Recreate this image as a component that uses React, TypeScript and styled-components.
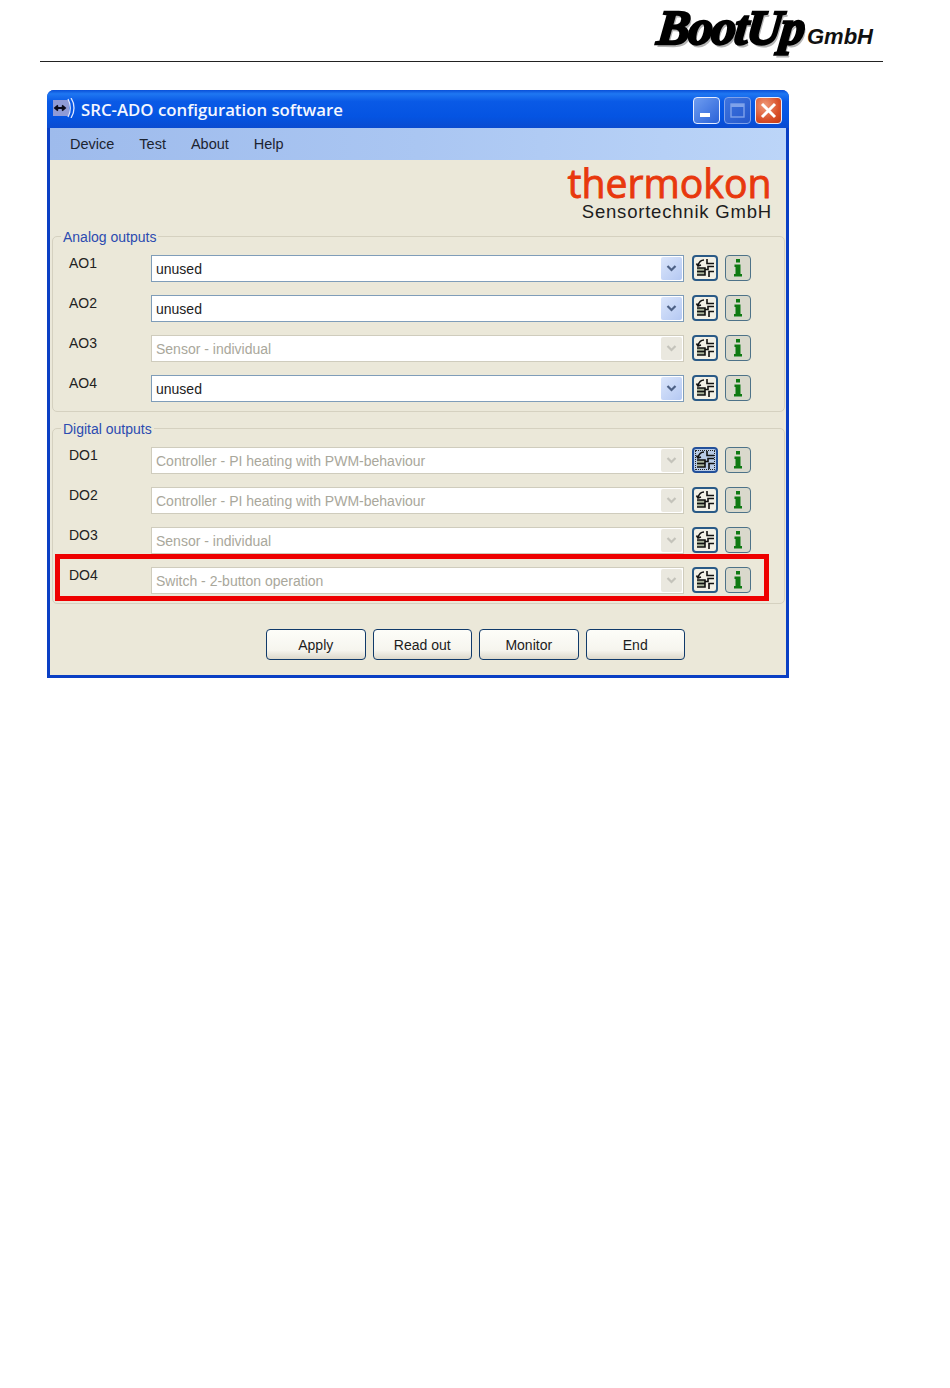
import React from "react";
import styled, { createGlobalStyle } from "styled-components";

const GlobalStyle = createGlobalStyle`
  html, body {
    margin: 0;
    padding: 0;
    background: #fff;
  }
  body {
    font-family: "Liberation Sans", Arial, sans-serif;
  }
`;

const Page = styled.div`
  width: 950px;
  height: 1388px;
  overflow: hidden;
  background: #fff;
`;

const Header = styled.header`
  width: 833px;
  height: 61px;
  margin-left: 40px;
  padding-right: 10px;
  border-bottom: 1px solid #222;
  display: flex;
  justify-content: flex-end;
  align-items: flex-end;
`;

const BootLogo = styled.div`
  display: flex;
  align-items: baseline;
  gap: 6px;
  margin-bottom: 8px;
  white-space: nowrap;
`;

const BootMark = styled.span`
  font-family: "Liberation Serif", serif;
  font-weight: 700;
  font-style: italic;
  font-size: 49px;
  line-height: 50px;
  letter-spacing: -1.5px;
  color: #000;
  -webkit-text-stroke: 2.4px #000;
  text-shadow: 2px 3px 0 #b5b5b5;
  display: inline-block;
  transform: skewX(-6deg);
  transform-origin: right bottom;
`;

const BootName = styled.span`
  font-size: 22px;
  font-weight: 700;
  font-style: italic;
  color: #111;
`;

const Window = styled.div`
  width: 742px;
  height: 588px;
  margin: 28px 0 0 47px;
  box-sizing: border-box;
  background: #0a3fc4;
  border-radius: 7px 7px 0 0;
  padding: 0 3px 3px;
  display: flex;
  flex-direction: column;
`;

const TitleBar = styled.div`
  height: 38px;
  flex: none;
  margin: 0 -3px;
  padding: 0 7px 0 6px;
  border-radius: 7px 7px 0 0;
  background: linear-gradient(180deg, #0a4fd8 0%, #1f77f2 10%, #0a5ae6 30%, #0554e2 70%, #0a4bd0 100%);
  display: flex;
  align-items: center;
`;

const AppIcon = styled.svg`
  width: 23px;
  height: 20px;
  margin: -2px 5px 0 0;
  flex: none;
`;

const Title = styled.div`
  flex: 1;
  color: #f4f7ff;
  font-family: "Open Sans", sans-serif;
  font-weight: 600;
  font-size: 16.8px;
  white-space: nowrap;
`;

const Controls = styled.div`
  display: flex;
  gap: 4px;
  margin-top: 2px;
`;

const ControlButton = styled.div<{ $kind: "min" | "max" | "close" }>`
  width: 27px;
  height: 27px;
  box-sizing: border-box;
  border: 1px solid ${(p) => (p.$kind === "max" ? "#7fa2ea" : "#e6edff")};
  border-radius: 4px;
  display: flex;
  align-items: center;
  justify-content: center;
  background: ${(p) =>
    p.$kind === "close"
      ? "radial-gradient(circle at 35% 30%, #ef9a78, #d9502a 60%, #c43a14)"
      : p.$kind === "max"
      ? "linear-gradient(135deg, #3f74de, #2458cc)"
      : "linear-gradient(135deg, #6f9df0, #2a62d8)"};
`;

const MenuBar = styled.nav`
  height: 32px;
  flex: none;
  background: linear-gradient(90deg, #9ebbec 0%, #aac6f2 50%, #bcd5f8 100%);
  display: flex;
  align-items: center;
  padding-left: 20px;
  gap: 25px;
  font-size: 14.5px;
  color: #1c2430;
`;

const Body = styled.div`
  flex: 1;
  background: #ebe8d9;
  display: flex;
  flex-direction: column;
  padding: 0 1px 0 2px;
`;

const BrandRow = styled.div`
  height: 76px;
  flex: none;
  display: flex;
  flex-direction: column;
  align-items: flex-end;
  padding-right: 13px;
`;

const Thermo = styled.div`
  margin-top: 1px;
  height: 42px;
  font-family: "Open Sans", sans-serif;
  font-size: 41px;
  line-height: 42px;
  font-weight: 400;
  color: #e8380d;
  -webkit-text-stroke: 0.9px #e8380d;
  transform: scaleX(0.955);
  transform-origin: right center;
`;

const Sensor = styled.div`
  font-family: "Liberation Sans", sans-serif;
  font-size: 18.5px;
  line-height: 20px;
  letter-spacing: 0.8px;
  color: #1d1d1d;
  margin-top: -1px;
`;

const Group = styled.section<{ $gap: number }>`
  position: relative;
  height: 176px;
  flex: none;
  box-sizing: border-box;
  margin-top: ${(p) => p.$gap}px;
  border: 1px solid #d5d1c0;
  border-radius: 5px;
  padding-top: 12px;
  display: flex;
  flex-direction: column;
`;

const GroupLabel = styled.div`
  position: absolute;
  top: -8px;
  left: 8px;
  padding: 0 2px;
  background: #ebe8d9;
  color: #2b4bb0;
  font-size: 14px;
  line-height: 16px;
`;

const Row = styled.div`
  height: 40px;
  flex: none;
  display: flex;
  align-items: flex-start;
`;

const RowLabel = styled.div`
  width: 98px;
  padding-left: 16px;
  box-sizing: border-box;
  font-size: 14px;
  line-height: 16px;
  margin-top: 6px;
  color: #222;
`;

const Combo = styled.div<{ $off?: boolean }>`
  width: 533px;
  height: 27px;
  margin-top: 6px;
  box-sizing: border-box;
  display: flex;
  align-items: center;
  background: #fff;
  border: 1px solid ${(p) => (p.$off ? "#cfccbd" : "#7f9db9")};
  padding: 0 1px 0 4px;
  font-size: 14px;
  color: ${(p) => (p.$off ? "#a9a79b" : "#1c1c1c")};
`;

const ComboText = styled.span`
  flex: 1;
  white-space: nowrap;
`;

const Arrow = styled.div<{ $off?: boolean }>`
  width: 21px;
  height: 23px;
  display: flex;
  align-items: center;
  justify-content: center;
  border-radius: 2px;
  background: ${(p) =>
    p.$off ? "#eae8df" : "linear-gradient(135deg, #dbe6fb, #b4c8f2)"};
`;

const ConfigButton = styled.div<{ $focus?: boolean }>`
  width: 26px;
  height: 26px;
  margin: 6px 0 0 8px;
  box-sizing: border-box;
  border: 2px solid ${(p) => (p.$focus ? "#23509a" : "#2a5a86")};
  border-radius: 4px;
  background: ${(p) => (p.$focus ? "#b9cbe6" : "#f2f0e6")};
  outline: ${(p) => (p.$focus ? "1px dotted #222" : "none")};
  outline-offset: -4px;
  display: flex;
  align-items: center;
  justify-content: center;
`;

const InfoButton = styled.div`
  width: 26px;
  height: 26px;
  margin: 6px 0 0 7px;
  box-sizing: border-box;
  border: 1px solid #4d7288;
  border-radius: 4px;
  background: #d9d9cc;
  display: flex;
  align-items: center;
  justify-content: center;
`;

const Highlight = styled.div`
  position: absolute;
  left: 2px;
  top: 125px;
  width: 714px;
  height: 47px;
  box-sizing: border-box;
  border: 5px solid #ee0000;
  pointer-events: none;
`;

const Footer = styled.div`
  flex: 1;
  display: flex;
  gap: 7px;
  padding: 25px 0 0 214px;
`;

const PushButton = styled.button`
  width: 99.5px;
  height: 31px;
  box-sizing: border-box;
  border: 1px solid #103a6a;
  border-radius: 4px;
  background: linear-gradient(180deg, #fdfdf9 0%, #f6f5ee 70%, #dcd8cb 100%);
  font-family: "Liberation Sans", sans-serif;
  font-size: 14px;
  color: #1c1c1c;
  padding: 0;
`;

const ChevronIcon = ({ off }: { off?: boolean }) => (
  <svg width="11" height="9" viewBox="0 0 11 9">
    <path
      d="M1.5 2 L5.5 6 L9.5 2"
      fill="none"
      stroke={off ? "#c4c3bb" : "#4d6185"}
      strokeWidth="2.2"
    />
  </svg>
);

const ConfigIcon = () => (
  <svg width="20" height="20" viewBox="0 0 20 20">
    <rect x="2" y="10" width="8" height="7" fill="#a9b39a" />
    <g fill="none" stroke="#111" strokeWidth="1.6">
      <path d="M3 7.5 C4 4 6 2 9 2" />
      <path d="M1.5 5.5 L3 8 L6 7" />
      <path d="M12 1 L12 5.5 L19 5.5" />
      <path d="M2 10 L10 10 L10 17 L2 17" />
      <path d="M2 13.5 L10 13.5" />
      <path d="M10 11.5 L13 11.5 L13 8.5 L19 8.5" />
      <path d="M14 19 L14 13.5 L19 13.5" />
    </g>
  </svg>
);

const InfoIcon = () => (
  <svg width="14" height="20" viewBox="0 0 14 20">
    <rect x="5" y="1" width="4" height="3.5" fill="#0f7a12" />
    <path d="M3.5 6.5 H9.5 V16 H11 V18.5 H3 V16 H4.5 V9 H3.5 Z" fill="#0f7a12" />
  </svg>
);

type RowData = { name: string; value: string; off?: boolean; focus?: boolean };

const analog: RowData[] = [
  { name: "AO1", value: "unused" },
  { name: "AO2", value: "unused" },
  { name: "AO3", value: "Sensor - individual", off: true },
  { name: "AO4", value: "unused" },
];

const digital: RowData[] = [
  { name: "DO1", value: "Controller - PI heating with PWM-behaviour", off: true, focus: true },
  { name: "DO2", value: "Controller - PI heating with PWM-behaviour", off: true },
  { name: "DO3", value: "Sensor - individual", off: true },
  { name: "DO4", value: "Switch - 2-button operation", off: true },
];

const OutputRow = ({ row }: { row: RowData }) => (
  <Row>
    <RowLabel>{row.name}</RowLabel>
    <Combo $off={row.off}>
      <ComboText>{row.value}</ComboText>
      <Arrow $off={row.off}>
        <ChevronIcon off={row.off} />
      </Arrow>
    </Combo>
    <ConfigButton $focus={row.focus}>
      <ConfigIcon />
    </ConfigButton>
    <InfoButton>
      <InfoIcon />
    </InfoButton>
  </Row>
);

export default function App() {
  return (
    <Page>
      <GlobalStyle />
      <Header>
        <BootLogo>
          <BootMark>BootUp</BootMark>
          <BootName>GmbH</BootName>
        </BootLogo>
      </Header>
      <Window>
        <TitleBar>
          <AppIcon viewBox="0 0 23 20">
            <rect x="0" y="2" width="16" height="16" fill="#8f9bd6" />
            <path d="M2 10 L12 10 M5 7.5 L2 10 L5 12.5 M9 7.5 L12 10 L9 12.5" stroke="#0a0a1a" strokeWidth="1.8" fill="none" />
            <path d="M15 1 C18 6 18 14 15 19 M18 0 C22 6 22 14 18 20" stroke="#dfe6ff" strokeWidth="1.3" fill="none" />
          </AppIcon>
          <Title>SRC-ADO configuration software</Title>
          <Controls>
            <ControlButton $kind="min">
              <svg width="15" height="15" viewBox="0 0 15 15">
                <rect x="1" y="10" width="10" height="4" fill="#fff" />
              </svg>
            </ControlButton>
            <ControlButton $kind="max">
              <svg width="17" height="17" viewBox="0 0 17 17">
                <rect x="2" y="2" width="13" height="13" fill="none" stroke="#7fa2ea" strokeWidth="1.4" />
                <rect x="2" y="2" width="13" height="3" fill="#7fa2ea" />
              </svg>
            </ControlButton>
            <ControlButton $kind="close">
              <svg width="19" height="19" viewBox="0 0 19 19">
                <path d="M3 3 L16 16 M16 3 L3 16" stroke="#fff" strokeWidth="3" />
              </svg>
            </ControlButton>
          </Controls>
        </TitleBar>
        <MenuBar>
          <span>Device</span>
          <span>Test</span>
          <span>About</span>
          <span>Help</span>
        </MenuBar>
        <Body>
          <BrandRow>
            <Thermo>thermokon</Thermo>
            <Sensor>Sensortechnik GmbH</Sensor>
          </BrandRow>
          <Group $gap={0}>
            <GroupLabel>Analog outputs</GroupLabel>
            {analog.map((row) => (
              <OutputRow key={row.name} row={row} />
            ))}
          </Group>
          <Group $gap={16}>
            <GroupLabel>Digital outputs</GroupLabel>
            {digital.map((row) => (
              <OutputRow key={row.name} row={row} />
            ))}
            <Highlight />
          </Group>
          <Footer>
            <PushButton>Apply</PushButton>
            <PushButton>Read out</PushButton>
            <PushButton>Monitor</PushButton>
            <PushButton>End</PushButton>
          </Footer>
        </Body>
      </Window>
    </Page>
  );
}
